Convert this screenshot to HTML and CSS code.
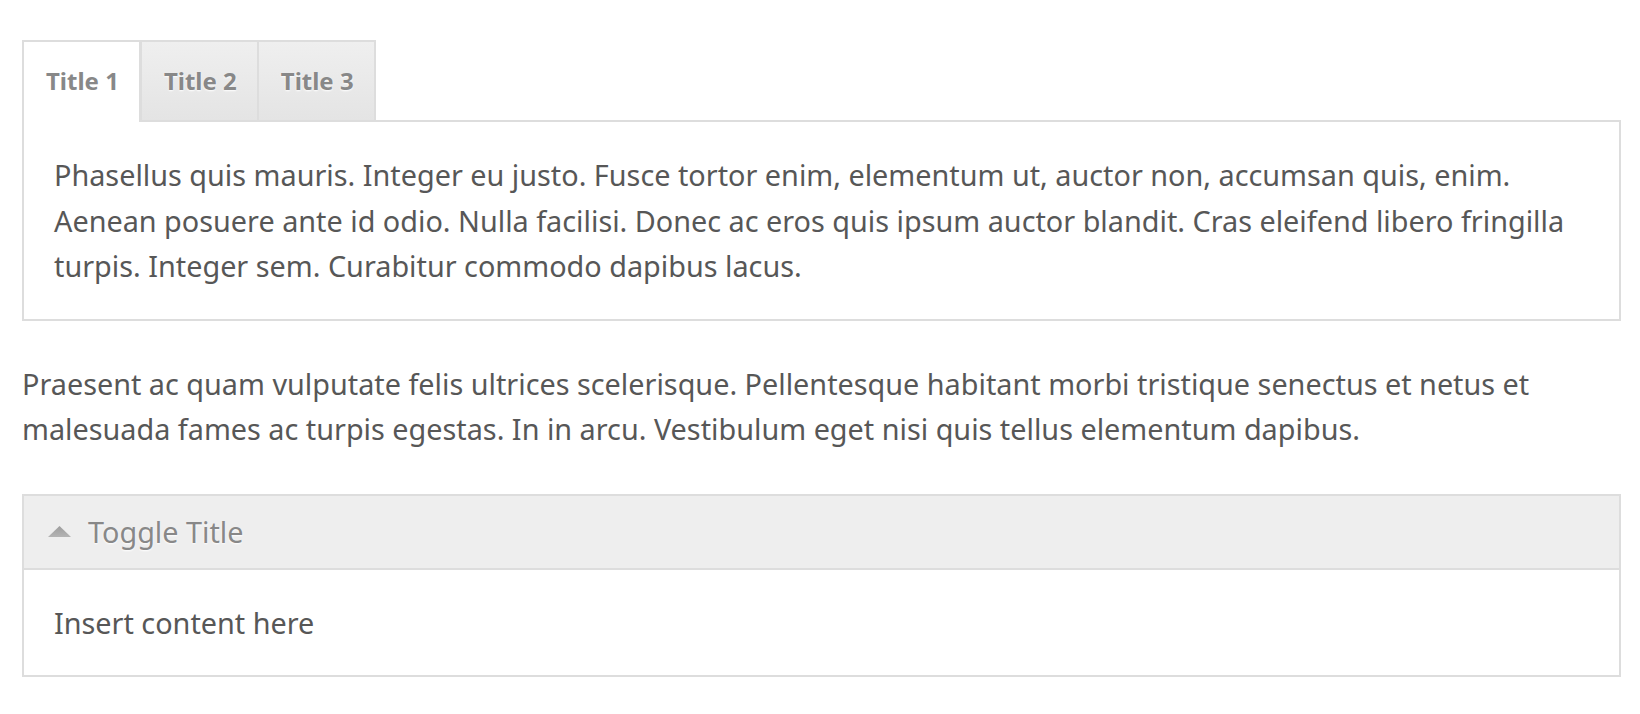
FILE: index.html
```html
<!DOCTYPE html>
<html>
<head>
<meta charset="utf-8">
<link rel="stylesheet" href="styles.css">
</head>
<body>
<div class="page">
  <div class="tabs">
    <ul class="tab-nav">
      <li class="tab active">Title 1</li>
      <li class="tab">Title 2</li>
      <li class="tab">Title 3</li>
    </ul>
    <div class="tab-panel">
      <p>Phasellus quis mauris. Integer eu justo. Fusce tortor enim, elementum ut, auctor non, accumsan quis, enim. Aenean posuere ante id odio. Nulla facilisi. Donec ac eros quis ipsum auctor blandit. Cras eleifend libero fringilla turpis. Integer sem. Curabitur commodo dapibus lacus.</p>
    </div>
  </div>
  <p class="text">Praesent ac quam vulputate felis ultrices scelerisque. Pellentesque habitant morbi tristique senectus et netus et malesuada fames ac turpis egestas. In in arcu. Vestibulum eget nisi quis tellus elementum dapibus.</p>
  <div class="toggle">
    <div class="toggle-head">
      <svg class="arrow" width="23" height="11" viewBox="0 0 23 11"><defs><linearGradient id="g" x1="0" y1="0" x2="0" y2="1"><stop offset="0" stop-color="#9d9d9d"/><stop offset="1" stop-color="#b4b4b4"/></linearGradient></defs><polygon points="11.5,0 23,11 0,11" fill="url(#g)"/></svg>
      <span class="toggle-title">Toggle Title</span>
    </div>
    <div class="toggle-body">Insert content here</div>
  </div>
</div>
</body>
</html>
```
FILE: styles.css
```css
html, body {
  margin: 0;
  padding: 0;
  background: #fff;
}
body {
  font-family: "Noto Sans", "Open Sans", sans-serif;
  font-size: 28.8px;
  line-height: 45.5px;
  color: #575757;
}
.page {
  padding: 40px 19px 0 22px;
}
p { margin: 0; }
.tab-nav {
  list-style: none;
  margin: 0;
  padding: 0;
  display: flex;
  position: relative;
  z-index: 1;
}
.tab {
  box-sizing: border-box;
  height: 80px;
  line-height: 78px;
  padding: 0 20px 0 22px;
  border: 2px solid #ddd;
  border-bottom: none;
  font-size: 24px;
  font-weight: bold;
  color: #888;
  text-shadow: 0 1px 2px #fff;
  background: linear-gradient(#efefef, #e4e4e4);
}
.tab + .tab { border-left: none; }
.tab.active {
  background: #fff;
  height: 82px;
  margin-bottom: -2px;
  border-right: 3px solid #ddd;
}
.tab-panel {
  border: 2px solid #ddd;
  padding: 30px;
}
.text {
  margin: 40px 0 42px;
}
.toggle {
  border: 2px solid #ddd;
}
.toggle-head {
  display: flex;
  align-items: center;
  background: #eee;
  border-bottom: 2px solid #ddd;
  height: 72px;
  padding: 0 24px;
}
.arrow { margin-right: 17px; }
.toggle-title {
  color: #888;
  text-shadow: 0 1px 2px #fff;
}
.toggle-body {
  padding: 30px;
}
```
